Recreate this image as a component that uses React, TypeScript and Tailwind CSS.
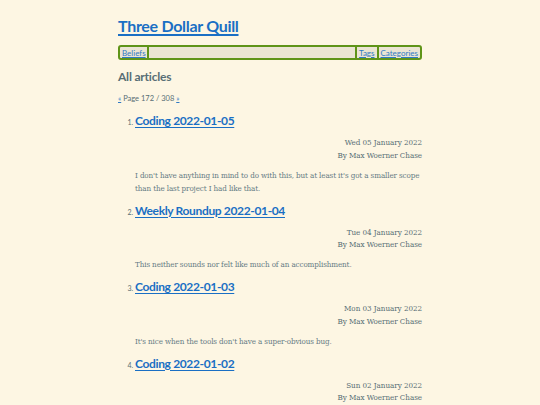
import React from "react";

const articles = [
  {
    title: "Coding 2022-01-05",
    date: "Wed 05 January 2022",
    desc: "I don't have anything in mind to do with this, but at least it's got a smaller scope than the last project I had like that.",
  },
  {
    title: "Weekly Roundup 2022-01-04",
    date: "Tue 04 January 2022",
    desc: "This neither sounds nor felt like much of an accomplishment.",
  },
  {
    title: "Coding 2022-01-03",
    date: "Mon 03 January 2022",
    desc: "It's nice when the tools don't have a super-obvious bug.",
  },
  {
    title: "Coding 2022-01-02",
    date: "Sun 02 January 2022",
    desc: "",
  },
];

const head = { fontFamily: 'Lato, "Open Sans", sans-serif' };
const body = { fontFamily: '"DejaVu Serif Condensed", "DejaVu Serif", serif', fontStretch: "condensed" as const };

export default function App() {
  return (
    <div className="w-full bg-[#fdf6e3] overflow-hidden h-[405px]">
      <div className="w-[304px] mx-auto pt-[15px]">
        <h1
          className="text-[16px] leading-[22px] font-bold tracking-[-0.3px] text-[#1a6fc4] underline decoration-[1.5px] underline-offset-[2px]"
          style={head}
        >
          Three Dollar Quill
        </h1>
        <nav
          className="mt-[8px] h-[15px] flex items-center border-2 border-[#5f9418] rounded-[3px] bg-[#ebe5d3] text-[8px] text-[#2f7ac4] px-[2px]"
          style={head}
        >
          <a className="underline pr-[1px]">Beliefs</a>
          <span className="w-[2px] h-[11px] bg-[#5f9418]" />
          <span className="flex-1" />
          <span className="w-[2px] h-[11px] bg-[#5f9418]" />
          <a className="underline px-[2px]">Tags</a>
          <span className="w-[2px] h-[11px] bg-[#5f9418]" />
          <a className="underline pl-[2px]">Categories</a>
        </nav>
        <h2 className="mt-[9px] text-[12px] leading-[16px] font-bold tracking-[-0.2px] text-[#586e75]" style={head}>
          All articles
        </h2>
        <div className="mt-[8px] text-[7.5px] leading-[12px] text-[#586e75]" style={head}>
          <a className="underline text-[#2f7ac4]">«</a> Page 172 / 308{" "}
          <a className="underline text-[#2f7ac4]">»</a>
        </div>
        <ol className="mt-[7px] pl-[17px] list-decimal marker:text-[#586e75] marker:text-[7px]" style={head}>
          {articles.map((a) => (
            <li key={a.title} className="mb-[7px]">
              <h2
                className="text-[12px] leading-[18px] font-bold tracking-[-0.35px] text-[#1a6fc4] underline underline-offset-[1.5px]"
                style={head}
              >
                {a.title}
              </h2>
              <div
                className="mt-[7px] text-right text-[8px] leading-[12.5px] tracking-[-0.05px] text-[#586e75]"
                style={body}
              >
                <div>{a.date}</div>
                <div>By Max Woerner Chase</div>
              </div>
              {a.desc && (
                <p className="mt-[6.5px] text-[8px] leading-[13px] tracking-[-0.12px] text-[#657b83]" style={body}>
                  {a.desc}
                </p>
              )}
            </li>
          ))}
        </ol>
      </div>
    </div>
  );
}
